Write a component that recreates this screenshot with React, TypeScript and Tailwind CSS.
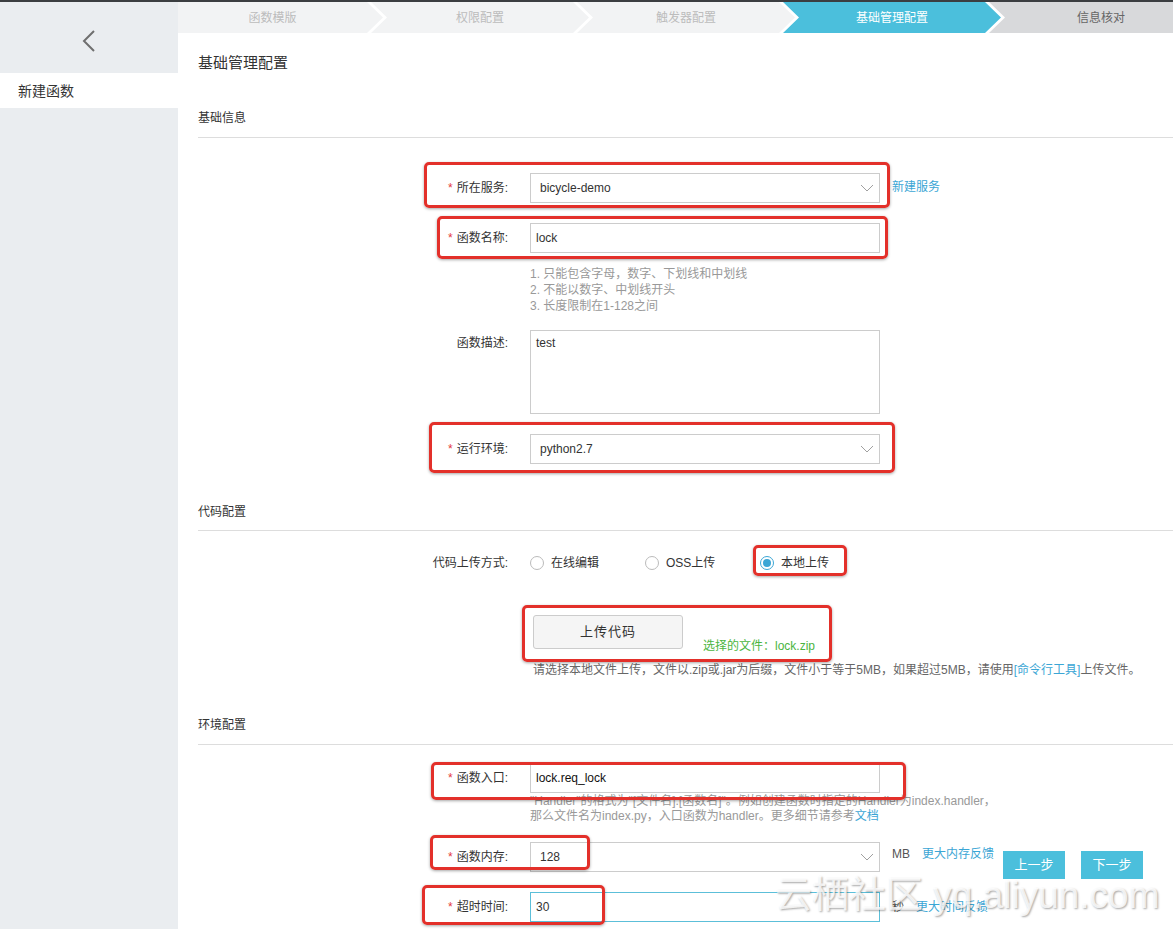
import React from "react";

const FONT = "font-['Liberation_Sans','Noto_Sans_CJK_SC',sans-serif]";

function Label({ text, req, top }: { text: string; req?: boolean; top?: boolean }) {
  return (
    <div
      className={`w-[310px] shrink-0 text-right text-[12px] leading-4 text-[#333] ${top ? "pt-[5px]" : ""}`}
    >
      {req && <span className="mr-[4px] text-[#e4393c]">*</span>}
      {text}
    </div>
  );
}

function Chevron() {
  return (
    <svg width="14" height="8" viewBox="0 0 14 8" className="shrink-0">
      <polyline points="1,1 7,7 13,1" fill="none" stroke="#a0a0a0" strokeWidth="1" />
    </svg>
  );
}

function Select({ value }: { value: string }) {
  return (
    <div className="ml-[22px] flex h-[30px] w-[350px] items-center justify-between border border-[#ccc] bg-white pl-[9px] pr-[5px] text-[12px] text-[#333]">
      <span>{value}</span>
      <Chevron />
    </div>
  );
}

function Input({ value, focus, dark }: { value: string; focus?: boolean; dark?: boolean }) {
  return (
    <div
      className={`ml-[22px] flex h-[30px] w-[350px] items-center bg-white pl-[5px] text-[12px] ${
        focus ? "border border-[#5cbfd9]" : "border border-[#ccc]"
      } ${dark ? "text-[#111]" : "text-[#333]"}`}
    >
      {value}
    </div>
  );
}

function Radio({ label, checked }: { label: string; checked?: boolean }) {
  return (
    <div className="flex w-[115px] shrink-0 items-center">
      <div
        className={`flex h-[14px] w-[14px] items-center justify-center rounded-full border bg-white ${
          checked ? "border-[#3ba6d5]" : "border-[#bbb]"
        }`}
      >
        {checked && <div className="h-[8px] w-[8px] rounded-full bg-[#3ba6d5]" />}
      </div>
      <span className="ml-[7px] text-[12px] leading-4 text-[#333]">{label}</span>
    </div>
  );
}

function RedBox({ cls }: { cls: string }) {
  return (
    <div
      className={`pointer-events-none absolute rounded-[5px] border-[3px] border-[#e3302a] shadow-[0_1px_3px_rgba(0,0,0,0.35)] ${cls}`}
    />
  );
}

export default function App() {
  return (
    <div className={`relative h-[929px] w-[1173px] overflow-hidden bg-white ${FONT}`}>
      <div className="h-[2px] bg-[#3b3e41]" />
      <div className="flex h-[927px]">
        <aside className="w-[178px] shrink-0 bg-[#eaedf0]">
          <div className="flex h-[71px] items-start justify-center pt-[28px]">
            <svg width="14" height="22" viewBox="0 0 14 22">
              <polyline points="12,1 2,11 12,21" fill="none" stroke="#6f6f6f" strokeWidth="2" />
            </svg>
          </div>
          <div className="flex h-[35px] items-center bg-white pl-[18px] pt-[2px] text-[14px] text-[#333]">
            新建函数
          </div>
        </aside>

        <main className="min-w-0 flex-1">
          {/* step bar */}
          <div className="flex h-[31px] bg-white text-[12px]">
            <div className="flex w-[205px] shrink-0 items-center justify-center bg-[#f2f3f4] pr-4 text-[#bcbcbc] [clip-path:polygon(0_0,calc(100%_-_16px)_0,100%_50%,calc(100%_-_16px)_100%,0_100%)]">
              函数模版
            </div>
            <div className="-ml-3 flex w-[218px] shrink-0 items-center justify-center bg-[#f2f3f4] text-[#bcbcbc] [clip-path:polygon(0_0,calc(100%_-_16px)_0,100%_50%,calc(100%_-_16px)_100%,0_100%,16px_50%)]">
              权限配置
            </div>
            <div className="-ml-3 flex w-[218px] shrink-0 items-center justify-center bg-[#f2f3f4] text-[#bcbcbc] [clip-path:polygon(0_0,calc(100%_-_16px)_0,100%_50%,calc(100%_-_16px)_100%,0_100%,16px_50%)]">
              触发器配置
            </div>
            <div className="-ml-3 flex w-[218px] shrink-0 items-center justify-center bg-[#4bbfdc] text-white [clip-path:polygon(0_0,calc(100%_-_16px)_0,100%_50%,calc(100%_-_16px)_100%,0_100%,16px_50%)]">
              基础管理配置
            </div>
            <div className="-ml-3 flex flex-1 items-center justify-center bg-[#d8d9db] pl-10 text-[#666] [clip-path:polygon(0_0,100%_0,100%_100%,0_100%,16px_50%)]">
              信息核对
            </div>
          </div>

          <div className="pl-5">
            <div className="mt-[20px] text-[15px] leading-5 text-[#333]">基础管理配置</div>

            <div className="mt-[37px] text-[12px] leading-4 text-[#333]">基础信息</div>
            <div className="mt-[11px] h-px bg-[#ddd]" />

            <div className="mt-[35px] flex items-center">
              <Label text="所在服务:" req />
              <Select value="bicycle-demo" />
              <a className="mb-[3px] ml-[12px] text-[12px] text-[#3ba6d5]">新建服务</a>
            </div>

            <div className="mt-[20px] flex items-center">
              <Label text="函数名称:" req />
              <Input value="lock" />
            </div>

            <div className="ml-[332px] mt-[13px] text-[12px] leading-4 text-[#999]">
              <div>1. 只能包含字母，数字、下划线和中划线</div>
              <div>2. 不能以数字、中划线开头</div>
              <div>3. 长度限制在1-128之间</div>
            </div>

            <div className="mt-[16px] flex items-start">
              <Label text="函数描述:" top />
              <div className="ml-[22px] h-[84px] w-[350px] border border-[#ccc] pl-[5px] pt-[4px] text-[12px] leading-4 text-[#333]">
                test
              </div>
            </div>

            <div className="mt-[20px] flex items-center">
              <Label text="运行环境:" req />
              <Select value="python2.7" />
            </div>

            <div className="mt-[40px] text-[12px] leading-4 text-[#333]">代码配置</div>
            <div className="mt-[10px] h-px bg-[#ddd]" />

            <div className="mt-[24px] flex items-center">
              <Label text="代码上传方式:" />
              <div className="ml-[22px] flex">
                <Radio label="在线编辑" />
                <Radio label="OSS上传" />
                <Radio label="本地上传" checked />
              </div>
            </div>

            <div className="ml-[335px] mt-[44px] flex items-start">
              <div className="flex h-[34px] w-[150px] items-center justify-center rounded-[3px] border border-[#ccc] bg-[#f5f5f5] text-[13px] tracking-[1px] text-[#333]">
                上传代码
              </div>
              <div className="ml-[20px] mt-[23px] text-[12px] leading-4 text-[#4bb53f]">
                选择的文件：lock.zip
              </div>
            </div>
            <div className="ml-[335px] mt-[8px] text-[12px] leading-4 text-[#666]">
              请选择本地文件上传，文件以.zip或.jar为后缀，文件小于等于5MB，如果超过5MB，请使用
              <span className="text-[#3ba6d5]">[命令行工具]</span>上传文件。
            </div>

            <div className="mt-[39px] text-[12px] leading-4 text-[#333]">环境配置</div>
            <div className="mt-[11px] h-px bg-[#ddd]" />

            <div className="mt-[18px] flex items-center">
              <Label text="函数入口:" req />
              <Input value="lock.req_lock" dark />
            </div>
            <div className="ml-[332px] mt-[1px] text-[12px] leading-[15px] text-[#999]">
              <div>"Handler"的格式为"[文件名].[函数名]"。例如创建函数时指定的Handler为index.handler，</div>
              <div>
                那么文件名为index.py，入口函数为handler。更多细节请参考
                <span className="text-[#3ba6d5]">文档</span>
              </div>
            </div>

            <div className="mt-[18px] flex items-center">
              <Label text="函数内存:" req />
              <Select value="128" />
              <span className="mb-[6px] ml-[12px] text-[12px] text-[#555]">MB</span>
              <a className="mb-[6px] ml-[12px] text-[12px] text-[#3ba6d5]">更大内存反馈</a>
            </div>

            <div className="mt-[20px] flex items-center">
              <Label text="超时时间:" req />
              <Input value="30" focus />
              <span className="ml-[12px] text-[12px] text-[#555]">秒</span>
              <a className="ml-[12px] text-[12px] text-[#3ba6d5]">更大时间反馈</a>
            </div>
          </div>
        </main>
      </div>

      {/* floating action buttons */}
      <div className="absolute left-[1003px] top-[851px] flex gap-4">
        <button className="flex h-[28px] w-[62px] items-center justify-center bg-[#4bbfdc] text-[13px] text-white">
          上一步
        </button>
        <button className="flex h-[28px] w-[62px] items-center justify-center bg-[#4bbfdc] text-[13px] text-white">
          下一步
        </button>
      </div>

      {/* annotation boxes */}
      <RedBox cls="left-[424px] top-[162px] w-[466px] h-[46px]" />
      <RedBox cls="left-[437px] top-[216px] w-[451px] h-[43px]" />
      <RedBox cls="left-[429px] top-[422px] w-[466px] h-[51px]" />
      <RedBox cls="left-[753px] top-[545px] w-[94px] h-[31px]" />
      <RedBox cls="left-[522px] top-[605px] w-[310px] h-[57px]" />
      <RedBox cls="left-[431px] top-[762px] w-[475px] h-[38px]" />
      <RedBox cls="left-[430px] top-[835px] w-[160px] h-[35px]" />
      <RedBox cls="left-[422px] top-[885px] w-[183px] h-[40px]" />

      {/* watermark */}
      <div className="pointer-events-none absolute left-[775px] top-[872px] whitespace-nowrap text-[37px] leading-[48px] text-white/80 [text-shadow:1px_1px_2px_rgba(0,0,0,0.35)]">
        云栖社区 yq.aliyun.com
      </div>
    </div>
  );
}
